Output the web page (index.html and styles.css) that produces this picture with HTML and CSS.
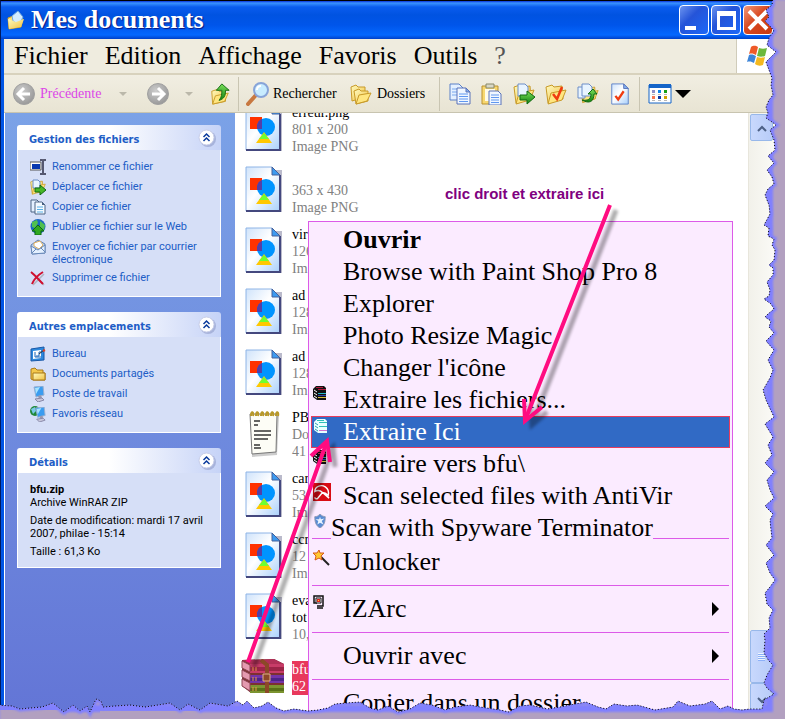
FILE: index.html
```html
<!DOCTYPE html>
<html lang="fr">
<head>
<meta charset="utf-8">
<title>Mes documents</title>
<link rel="stylesheet" href="styles.css">
</head>
<body>
<svg class="defs" aria-hidden="true">
  <defs>
    <linearGradient id="gPage" x1="0" y1="0" x2="1" y2="1"><stop offset="0" stop-color="#cfe3fb"/><stop offset=".45" stop-color="#fff"/><stop offset="1" stop-color="#a9d0fb"/></linearGradient>
    <linearGradient id="gFold" x1="0" y1="0" x2="1" y2="1"><stop offset="0" stop-color="#fffbc0"/><stop offset="1" stop-color="#f0c040"/></linearGradient>
    <radialGradient id="gGrey" cx=".4" cy=".35" r=".7"><stop offset="0" stop-color="#cdcdcd"/><stop offset="1" stop-color="#969696"/></radialGradient>
    <linearGradient id="gGreen" x1="0" y1="0" x2="0" y2="1"><stop offset="0" stop-color="#7be05a"/><stop offset="1" stop-color="#108010"/></linearGradient>
    <symbol id="image" viewBox="0 0 38 48">
      <path d="M4 4h33v42H4z" fill="#8c8ca8" opacity=".6"/>
      <path d="M1 1h26l8 8v36H1z" fill="url(#gPage)" stroke="#8eb4e6"/>
      <path d="M35 9v36H1" fill="none" stroke="#44487e" stroke-width="2"/>
      <path d="M27 1v8h8z" fill="#3d9af0" stroke="#44609a"/>
      <path d="M5 12h12v12H5z" fill="#ff3200"/>
      <circle cx="21" cy="22" r="9" fill="#0094ff"/>
      <path d="M12 20c1-3 2-5 5-6v10h-5z" fill="#5340a8"/>
      <path d="M19 27l8 11H11z" fill="#ffc800"/>
      <path d="M19 28l5 6H14z" fill="#6eff32"/>
    </symbol>
    <symbol id="folder" viewBox="0 0 22 22">
      <path d="M1 4l6-2 2 2 8-1 1 13-15 4z" fill="url(#gFold)" stroke="#c89a28"/>
      <path d="M6 10l15-3-4 10-14 4z" fill="#ffe680" stroke="#c89a28"/>
    </symbol>
    <symbol id="sheets" viewBox="0 0 22 22">
      <path d="M1 1h9l4 4v12H1z" fill="#e4f0ff" stroke="#5a80c8"/>
      <path d="M3 6h8M3 9h8M3 12h6" stroke="#78a8ee"/>
      <path d="M8 5h9l4 4v12H8z" fill="#f0f7ff" stroke="#5a72b8"/>
      <path d="M17 5v4h4z" fill="#80b0f0" stroke="#5a72b8"/>
      <path d="M10 11h9M10 13.500h9M10 16h9M10 18.500h9" stroke="#6098f0"/>
    </symbol>
    <symbol id="books" viewBox="0 0 14 14">
      <path d="M0 3l3-3h8l2 2v12H4l-4-3z" fill="#111"/>
      <path d="M5 3.500h8M3 1.500h7" stroke="#b01840"/>
      <path d="M5 7.500h8" stroke="#28b8c8"/>
      <path d="M5 9.500h8" stroke="#3048a8"/>
      <path d="M5 11.500h8" stroke="#d8c040"/>
      <path d="M1 4l3 2M1 7l3 2M1 10l3 2" stroke="#fff"/>
    </symbol>
    <symbol id="chevrons" viewBox="0 0 18 18">
      <circle cx="10" cy="10" r="8" fill="#8f9bc8" opacity=".6"/>
      <circle cx="8.500" cy="8.500" r="7.500" fill="#fff" stroke="#c8cee8"/>
      <path d="M5.500 8l3-3 3 3M5.500 12l3-3 3 3" fill="none" stroke="#0a3a9c" stroke-width="1.500"/>
    </symbol>
    <symbol id="pc" viewBox="0 0 16 16">
      <path d="M4 1l9-1 1 9-8 2z" fill="#3a9cf0" stroke="#9ab0d0"/><path d="M5 2l5-1-4 7z" fill="#a8e4ff"/>
      <path d="M8 10l3-1 1 3-3 1z" fill="#9898b0"/><path d="M5 13l7-1 2 2-6 2z" fill="#c8c8dc" stroke="#8888a8"/>
    </symbol>
  </defs>
</svg>

<main class="window">
  <header class="titlebar">
    <svg class="i18" viewBox="0 0 18 20"><path d="M1 8l5-2 10 3-2 8-12 2z" fill="#ffe078" stroke="#c89a28"/><path d="M5 6l6-5 5 6-4 8-6-4z" fill="#d4ecff" stroke="#72a8de"/><path d="M1 9l8 3 8-3-3 8-12 2z" fill="url(#gFold)"/></svg>
    <h1>Mes documents</h1>
    <div class="winbtns">
      <button aria-label="Réduire"><svg viewBox="0 0 26 26"><path d="M4 19h11v4H4z" fill="#fff"/></svg></button>
      <button aria-label="Agrandir"><svg viewBox="0 0 26 26"><path d="M4 4h19v19H4zM7 9v11h13V9z" fill="#fff" fill-rule="evenodd"/></svg></button>
      <button class="close" aria-label="Fermer"><svg viewBox="0 0 26 26"><path d="M4 4l18 18M22 4L4 22" stroke="#fff" stroke-width="4"/></svg></button>
    </div>
  </header>

  <nav class="menubar">
    <button>Fichier</button><button>Edition</button><button>Affichage</button><button>Favoris</button><button>Outils</button><button>?</button>
    <span class="flag"><svg viewBox="0 0 24 24"><path d="M6 3c3-2 5-1 7 0l-2 8c-2-1-4-2-7-1z" fill="#ee5a28"/><path d="M14 4c3 1 5 1 8 0l-2 8c-3 1-5 1-8 0z" fill="#6cb83c"/><path d="M4 11c3-1 5 0 7 1l-2 7c-2-1-4-2-7-1z" fill="#3c84d8"/><path d="M12 13c3 1 5 1 8 0l-2 8c-3 1-5 1-8-1z" fill="#f4b820"/></svg></span>
  </nav>

  <div class="toolbar">
    <button class="back"><svg viewBox="0 0 22 22"><circle cx="11" cy="11" r="10.500" fill="url(#gGrey)" stroke="#a0a0a0"/><path d="M11 5l-6 6 6 6M6 11h11" fill="none" stroke="#fff" stroke-width="3"/></svg>Précédente</button>
    <span class="tri"></span>
    <button class="forward" aria-label="Suivante"><svg viewBox="0 0 22 22"><circle cx="11" cy="11" r="10.500" fill="url(#gGrey)" stroke="#a0a0a0"/><path d="M11 5l6 6-6 6M16 11H5" fill="none" stroke="#fff" stroke-width="3"/></svg></button>
    <span class="tri"></span>
    <button class="up" aria-label="Dossier parent"><svg viewBox="0 0 22 24"><path d="M2 9l6-2 2 2h7v11l-14 3z" fill="url(#gFold)" stroke="#c89a28"/><path d="M6 14l14-3-4 9-13 3z" fill="#ffe680" stroke="#c89a28"/><path d="M13 1l8 7h-4c0 6-1 9-7 11 3-4 3-7 3-11H7z" fill="url(#gGreen)" stroke="#116a11"/></svg></button>
    <span class="rule"></span>
    <button class="search"><svg viewBox="0 0 24 24"><path d="M10 13l-8 9" stroke="#c87840" stroke-width="4" stroke-linecap="round"/><circle cx="15" cy="8" r="7" fill="#c8ecff" stroke="#88a4d8" stroke-width="2"/><path d="M11 8c0-3 2-4 4-4" fill="none" stroke="#fff" stroke-width="2"/></svg>Rechercher</button>
    <button class="folders"><svg viewBox="0 0 22 22"><path d="M1 4l5-2 2 2 7 0v10l-13 4z" fill="url(#gFold)" stroke="#c89a28"/><path d="M4 8l5-2 2 2h7v10l-12 3z" fill="url(#gFold)" stroke="#c89a28"/><path d="M9 12l12-2-4 8-11 3z" fill="#ffe680" stroke="#c89a28"/></svg>Dossiers</button>
    <span class="rule"></span>
    <div class="tools">
      <button aria-label="Copier"><svg><use href="#sheets"/></svg></button>
      <button aria-label="Coller"><svg viewBox="0 0 22 22"><path d="M1 3h16v18H1z" fill="#f8d870" stroke="#b89030"/><path d="M4 6h10v12H4z" fill="#fffbe8"/><path d="M5 1h8v4H5z" fill="#d8d8c8" stroke="#888868"/><path d="M8 8h9l3 3v11H8z" fill="#f0f7ff" stroke="#5a72b8"/><path d="M10 12h8M10 14.500h8M10 17h8M10 19.500h8" stroke="#6098f0"/></svg></button>
      <button aria-label="Déplacer vers"><svg viewBox="0 0 22 22"><use href="#folder" width="22" height="22"/><path d="M5 1h7l3 3v9H5z" fill="#e8f4ff" stroke="#6c8ec8"/><path d="M7 12h7V8l8 6-8 7v-4H7z" fill="url(#gGreen)" stroke="#116a11"/></svg></button>
      <button aria-label="Copier vers"><svg viewBox="0 0 22 22"><use href="#folder" width="22" height="22"/><path d="M8 11l4 5 5-12" fill="none" stroke="#f03c10" stroke-width="2.500"/></svg></button>
      <button aria-label="Ouvrir"><svg viewBox="0 0 22 22"><use href="#folder" x="3" width="19" height="22"/><path d="M1 4h7v11H1z" fill="#e8f4ff" stroke="#6c8ec8"/><path d="M5 1h7l3 3v9H5z" fill="#e8f4ff" stroke="#6c8ec8"/><path d="M5 17c6 1 9-1 9-6h-3l5-5 4 5h-3c0 8-5 10-12 6z" fill="url(#gGreen)" stroke="#116a11"/></svg></button>
      <button aria-label="Propriétés"><svg viewBox="0 0 22 24"><path d="M2 1h13l5 5v17H2z" fill="url(#gPage)" stroke="#5a80c8"/><path d="M15 1v5h5z" fill="#80b0f0" stroke="#5a72b8"/><path d="M6 14l3 4 6-9" fill="none" stroke="#f03c10" stroke-width="2.500"/></svg></button>
    </div>
    <span class="rule"></span>
    <button class="views" aria-label="Affichage"><svg viewBox="0 0 24 20"><path d="M1 1h22v18H1z" fill="#fff" stroke="#1464c8"/><path d="M1 0h22v4H1z" fill="#1464c8"/><path d="M4 6h3v3H4z" fill="#9090c8"/><path d="M10 6h3v3h-3z" fill="#1084e8"/><path d="M16 6h3v3h-3z" fill="#18a018"/><path d="M4 12h3v3H4z" fill="#f87850"/><path d="M10 12h3v3h-3z" fill="#1038a0"/><path d="M16 12h3v3h-3z" fill="#d0a000"/><path d="M4 10.500h3m3 0h3m3 0h3M4 16.500h3m3 0h3m3 0h3" stroke="#b8b8b8"/></svg><span class="drop"></span></button>
  </div>

  <div class="content">
    <aside class="sidebar">
      <section class="panel">
        <header><h2>Gestion des fichiers</h2><button aria-label="Réduire la section"><svg><use href="#chevrons"/></svg></button></header>
        <ul>
          <li><svg viewBox="0 0 16 16"><path d="M0 3h11v8H0z" fill="#fff" stroke="#555"/><path d="M2 5h8v5H2z" fill="#0838b0"/><path d="M10 1h2l1 1 1-1h2M13 2v12M10 15h2l1-1 1 1h2" stroke="#555870" stroke-width="2" fill="none"/></svg><a href="#">Renommer ce fichier</a></li>
          <li><svg viewBox="0 0 16 16"><use href="#folder" width="16" height="16"/><path d="M3 1h5l2 2v6H3z" fill="#e8f4ff" stroke="#6c8ec8"/><path d="M5 9h5V6l6 5-6 5v-3H5z" fill="#48b828" stroke="#116a11"/></svg><a href="#">Déplacer ce fichier</a></li>
          <li><svg viewBox="0 0 16 16"><path d="M1 1h6l3 3v9H1z" fill="#e4f0ff" stroke="#4c6484"/><path d="M5 3h7l3 3v9H5z" fill="#f4faff" stroke="#4c6484"/><path d="M12 3v3h3z" fill="#4c6484"/><path d="M7 8h6M7 10.500h6M7 13h6" stroke="#58b0e8"/></svg><a href="#">Copier ce fichier</a></li>
          <li><svg viewBox="0 0 16 16"><circle cx="8" cy="7.500" r="7.500" fill="#1c68c0"/><path d="M2 3l5-2 1 3-3 5-3-1zM10 2l5 4-1 5-4-3z" fill="#50c050"/><path d="M8 6l6 6h-3v4H5v-4H2z" fill="#30a820" stroke="#0c6a10"/></svg><a href="#">Publier ce fichier sur le Web</a></li>
          <li><svg viewBox="0 0 16 16"><path d="M1 6l7-5 7 4v9L2 15z" fill="#b8d0f0" stroke="#6080b0"/><path d="M4 4l6-2 3 4-4 4-5-3z" fill="#fff" stroke="#e0b060"/><path d="M1 7l7 4 7-5v8L2 15zM2 14l4-4M15 13l-4-4" fill="#e4f0ff" stroke="#6888b8"/></svg><a href="#">Envoyer ce fichier par courrier électronique</a></li>
          <li><svg viewBox="0 0 16 16"><path d="M2 3l12 12M14 4L3 15" stroke="#888" stroke-width="1.500" opacity=".5"/><path d="M1 2c4 3 7 7 12 12M13 2C8 5 4 9 2 14" stroke="#d01030" stroke-width="2" fill="none"/></svg><a href="#">Supprimer ce fichier</a></li>
        </ul>
      </section>
      <section class="panel">
        <header><h2>Autres emplacements</h2><button aria-label="Réduire la section"><svg><use href="#chevrons"/></svg></button></header>
        <ul>
          <li><svg viewBox="0 0 16 16"><path d="M1 3l13-2v13L1 15z" fill="#2c88dc" stroke="#1858a8"/><path d="M3 5l8-1v8l-8 1z" fill="#fff"/><path d="M6 10h3V6h3M5 6v5l6 0" stroke="#1864b8" fill="none"/><path d="M9 8l5-4" stroke="#333"/><path d="M13 5l2-1" stroke="#e04020" stroke-width="2"/></svg><a href="#">Bureau</a></li>
          <li><svg viewBox="0 0 16 16"><path d="M1 3l4-1 2 2h6v3h2v7H3L1 13z" fill="#f4c84c" stroke="#a87818"/><path d="M3 7h12v7H3z" fill="url(#gFold)" stroke="#a87818"/></svg><a href="#">Documents partagés</a></li>
          <li><svg><use href="#pc"/></svg><a href="#">Poste de travail</a></li>
          <li><svg viewBox="0 0 16 16"><circle cx="5" cy="5" r="5" fill="#208838"/><path d="M1 3l4-2 1 4-3 3z" fill="#78c8e8"/><use href="#pc" x="2" y="1" width="15" height="15"/></svg><a href="#">Favoris réseau</a></li>
        </ul>
      </section>
      <section class="panel">
        <header><h2>Détails</h2><button aria-label="Réduire la section"><svg><use href="#chevrons"/></svg></button></header>
        <div class="details">
          <p><b>bfu.zip</b><br>Archive WinRAR ZIP</p>
          <p>Date de modification: mardi 17 avril 2007, philae - 15:14</p>
          <p>Taille : 61,3 Ko</p>
        </div>
      </section>
    </aside>

    <ul class="files">
      <li><svg><use href="#image"/></svg><p><b>erreur.png</b><br>801 x 200<br>Image PNG</p></li>
      <li><svg><use href="#image"/></svg><p><br>363 x 430<br>Image PNG</p></li>
      <li><svg><use href="#image"/></svg><p><b>vir</b><br>126<br>Im</p></li>
      <li><svg><use href="#image"/></svg><p><b>ad</b><br>128<br>Im</p></li>
      <li><svg><use href="#image"/></svg><p><b>ad</b><br>128<br>Im</p></li>
      <li><svg viewBox="0 0 38 48"><path d="M6 6h28l-2 39-25 2z" fill="#aaa" opacity=".6"/><path d="M5 4h27l-1 38-24 2z" fill="#fdfdf6" stroke="#777"/><path d="M6 6c0-6 3-4 2 0m3 0c0-6 3-4 2 0m3 0c0-6 3-4 2 0m3 0c0-6 3-4 2 0m3 0c0-6 3-4 2 0m3 0c0-6 3-4 2 0" fill="none" stroke="#b89828" stroke-width="2"/><path d="M9 11h6M9 15h4M9 21h17M9 25h17M9 29h14M9 35h6M9 38h7" stroke="#333" stroke-width="1.500"/></svg><p><b>PB</b><br>Do<br>41</p></li>
      <li><svg><use href="#image"/></svg><p><b>car</b><br>53<br>Im</p></li>
      <li><svg><use href="#image"/></svg><p><b>ccr</b><br>12<br>Im</p></li>
      <li><svg><use href="#image"/></svg><p><b>eva</b><br><b>tot</b><br>10,</p></li>
      <li class="chosen"><svg viewBox="0 0 44 36"><path d="M1 1l32-1 10 5v29H10L1 27z" fill="#7c3030"/><path d="M1 1l32-1 10 5H9z" fill="#b03058"/><path d="M9 5h34v9H9z" fill="#c83c68"/><path d="M9 8h34v4H9z" fill="#9c2448"/><path d="M9 16h34v8H9z" fill="#7434a8"/><path d="M9 19h34v3H9z" fill="#4c2488"/><path d="M9 26h34v8H9z" fill="#7c9430"/><path d="M9 29h34v3H9z" fill="#587018"/><path d="M1 2l8 4v7l-8-4zM1 11l8 4v7l-8-4zM1 20l8 4v8l-8-5z" fill="#e49ab0" stroke="#8c4454"/><path d="M20 1l6 5v28" fill="none" stroke="#8c4828" stroke-width="4"/><path d="M22 15h7v7h-7z" fill="#8c4828" stroke="#e0b088"/><path d="M12 8v4m3-4v4m-3 6v4m3-4v4m-3 6v4m3-4v4" stroke="#e89848"/></svg><p>bfu<br>62</p></li>
    </ul>

    <div class="scrollbar">
      <button aria-label="Haut"><svg viewBox="0 0 10 8"><path d="M1 7l4-4 4 4" fill="none" stroke="#4d6185" stroke-width="2"/></svg></button>
      <span class="thumb"><i></i></span>
      <button class="down" aria-label="Bas"><svg viewBox="0 0 10 8"><path d="M1 1l4 4 4-4" fill="none" stroke="#4d6185" stroke-width="2"/></svg></button>
    </div>
  </div>
</main>

<p class="note">clic droit et extraire ici</p>

<ul class="context">
  <li><button class="default">Ouvrir</button></li>
  <li><button>Browse with Paint Shop Pro 8</button></li>
  <li><button>Explorer</button></li>
  <li><button>Photo Resize Magic</button></li>
  <li><button>Changer l'icône</button></li>
  <li><svg class="i14"><use href="#books"/></svg><button>Extraire les fichiers...</button></li>
  <li class="active"><svg class="i14" viewBox="0 0 14 14"><path d="M0 3l3-3h8l2 2v12H4l-4-3z" fill="#e8ffff"/><path d="M5 3.500h8M3 1.500h7M5 7.500h8" stroke="#30c0b8"/><path d="M5 11.500h8" stroke="#d070d0"/><path d="M1 4l3 2M1 7l3 2M1 10l3 2" stroke="#30a0b0"/></svg><button>Extraire Ici</button></li>
  <li><svg class="i14"><use href="#books"/></svg><button>Extraire vers bfu\</button></li>
  <li><svg class="i18" viewBox="0 0 19 19"><path d="M0 0h19v19H0z" fill="#d80c14"/><path d="M2 9C2 4 8 1 13 4c3 2 4 5 3 9-2-2-4-3-6-3-2-2-5-3-8-1zM10 10l-5 6c-1 1-3 1-3-1M10 10l7 6" fill="none" stroke="#fff" stroke-width="1.500"/></svg><button>Scan selected files with AntiVir</button></li>
  <li class="wide"><svg class="i14" viewBox="0 0 14 16"><path d="M1 3c3 0 4-1 6-3 2 2 4 3 6 3 0 6-1 10-6 13C2 13 1 9 1 3z" fill="#5a8cd4" stroke="#9098b0"/><path d="M7 3l1 3 4-1-3 3 2 4-4-2-3 2 1-4-3-2h4z" fill="#e8f4ff"/></svg><button>Scan with Spyware Terminator</button></li>
  <li class="line overlap" role="separator"></li>
  <li><svg class="i18" viewBox="0 0 18 18"><path d="M8 8l8 8" stroke="#222" stroke-width="2"/><path d="M6 1l1 3 4 0-3 3 1 4-3-2-4 2 1-4-3-3 4 0z" fill="#ffc830" stroke="#d85818"/></svg><button>Unlocker</button></li>
  <li class="line" role="separator"></li>
  <li><svg class="i14" viewBox="0 0 14 14"><path d="M1 4V1h9v10H4M1 4v4h3M4 13h6" fill="none" stroke="#111" stroke-width="1.500"/><path d="M3 3h5v5H3z" fill="#fff" stroke="#111"/><path d="M4 4h3v3H4z" fill="#e02020"/><path d="M5 5h1v1H5z" fill="#ffe020"/></svg><button>IZArc</button><span class="arrow"></span></li>
  <li class="line" role="separator"></li>
  <li><button>Ouvrir avec</button><span class="arrow"></span></li>
  <li class="line" role="separator"></li>
  <li><button>Copier dans un dossier</button></li>
</ul>

<svg class="pointers" viewBox="0 0 785 719" aria-hidden="true">
  <defs><filter id="soft" x="-20%" y="-20%" width="140%" height="140%"><feGaussianBlur stdDeviation="1.500"/></filter></defs>
  <g transform="translate(6 5)" fill="none" stroke="#000" stroke-width="5" opacity=".32" filter="url(#soft)"><path d="M610 205L526 420M524 399l2 21 15-13M248 662l79-220M312 456l15-14 2 20"/></g>
  <g fill="none" stroke="#ff0c80" stroke-width="4"><path d="M610 205L526 418M248 662l78-218"/><path d="M524 399l1 22 17-14M311 456l16-15 3 21"/></g>
</svg>

<svg class="torn" viewBox="0 0 785 719" preserveAspectRatio="none" aria-hidden="true">
  <defs>
    <path id="edge" d="M773 -3L772 5 766 10 769 17 765 21 771 27 774 31 769 38 767 45 776 52 770 58 766 62 769 70 772 78 771 85 773 95 769 100 766 107 768 113 766 118 772 122 776 125 770 130 774 140 775 150 768 156 774 163 767 170 772 177 774 184 768 189 765 195 769 205 770 214 764 225 769 228 768 236 774 239 772 245 775 250 774 260 769 265 773 268 773 275 767 282 770 290 769 296 764 299 771 304 774 309 768 314 765 317 771 321 769 327 774 333 766 341 774 350 768 360 773 370 770 378 763 390 766 400 774 417 765 424 773 437 768 445 772 455 765 463 774 472 767 480 770 490 774 498 765 506 773 514 770 520 771 530 772 538 766 545 770 550 774 555 766 563 770 573 775 580 770 587 765 593 767 604 773 610 769 618 770 628 764 634 765 640 764 653 769 661 773 665 767 675 764 683 767 688 774 694 764 700 762 709 750 709 742 710 734 709 728 706 720 709 712 701 705 704 690 706 678 701 673 707 655 710 637 705 627 706 614 704 606 709 598 707 586 702 575 704 560 707 547 709 530 705 520 706 509 712 500 710 480 707 470 705 455 707 445 710 432 705 420 703 410 709 398 712 388 706 378 710 370 708 360 702 346 703 335 704 328 708 318 710 308 711 294 709 284 711 276 708 268 702 262 706 254 708 247 701 243 705 237 701 228 706 210 703 200 710 188 704 180 710 170 703 158 705 145 707 130 705 115 706 103 707 101 701 96 699 90 712 87 706 80 711 73 705 64 712 53 703 42 707 30 708 20 709 12 706 -3 705V725H790V-3z"/>
    <clipPath id="outside"><use href="#edge"/></clipPath>
    <filter id="halo" x="-2%" y="-2%" width="104%" height="104%"><feGaussianBlur stdDeviation="1"/></filter>
  </defs>
  <use href="#edge" fill="#b2a0c0"/>
  <g clip-path="url(#outside)">
    <path d="M766 -3H773V712H-3V705H766z" fill="#8080ff" filter="url(#halo)"/>
    <path d="M-3 710H60V725H-3zM100 711H200V725H100z" fill="#b2a0c0"/>
    <use href="#edge" fill="none" stroke="#8080ff" stroke-width="5" filter="url(#halo)"/>
  </g>
  <use href="#edge" fill="none" stroke="#000" stroke-dasharray="1 2"/>
</svg>
</body>
</html>
```
FILE: styles.css
```css
* { box-sizing: border-box; }

body {
  margin: 0;
  height: 100vh;
  overflow: hidden;
  position: relative;
  background: #b2a0c0;
  font-family: "Liberation Serif", "Book Antiqua", serif;
  color: #000;
}

h1, h2, p, ul { margin: 0; padding: 0; }
ul { list-style: none; }
svg { display: block; flex: none; }
button {
  display: flex;
  align-items: center;
  margin: 0;
  padding: 0;
  border: 0;
  background: none;
  font: inherit;
  color: inherit;
  white-space: nowrap;
}
.defs { position: absolute; width: 0; height: 0; }
.i18 { width: 18px; height: 20px; }
.i14 { width: 14px; height: 14px; }

.window {
  display: flex;
  flex-direction: column;
  height: 100vh;
  border-top: 1px solid #000;
  border-left: 1px solid #001a60;
}

.titlebar {
  display: flex;
  align-items: center;
  flex: none;
  height: 38px;
  padding: 0 12px 0 6px;
  gap: 6px;
  background: linear-gradient(#0831d9 0, #3a93ff 2px, #0a5cee 6px, #0053e1 14px, #0055ea 24px, #0468ff 34px, #0040c8 38px);
  color: #fff;
}
.titlebar h1 {
  flex: 1;
  font-size: 26px;
  line-height: 30px;
  text-shadow: 1px 1px 1px #0a1883;
}
.winbtns { display: flex; gap: 2px; }
.winbtns button {
  justify-content: center;
  width: 30px;
  height: 30px;
  border: 1px solid #fff;
  border-radius: 4px;
  background: linear-gradient(135deg, #6c94f0, #2554d8 40%, #1c68f8);
}
.winbtns .close { background: linear-gradient(135deg, #f09878, #d84820 45%, #c83810); }
.winbtns svg { width: 26px; height: 26px; }

.menubar {
  display: flex;
  align-items: stretch;
  flex: none;
  height: 36px;
  margin-left: 3px;
  padding-left: 10px;
  gap: 17px;
  border-bottom: 2px solid #d8d2bd;
  background: #efecdf;
  font-size: 26px;
  box-shadow: -3px 0 #0055e5;
}
.menubar button:last-of-type { color: #555; }
.flag {
  display: flex;
  align-items: center;
  width: 49px;
  margin-left: auto;
  padding-left: 8px;
  border-left: 1px solid #d0ccba;
  background: #fff;
}
.flag svg { width: 24px; height: 24px; }

.toolbar {
  display: flex;
  align-items: center;
  flex: none;
  height: 38px;
  margin-left: 3px;
  padding-left: 9px;
  border-bottom: 1px solid #c8c4b0;
  background: linear-gradient(#f1eee2, #e8e4d3);
  font-size: 14px;
  box-shadow: -3px 0 #0055e5;
}
.toolbar svg { width: 22px; height: 22px; }
.back { width: 106px; gap: 5px; color: #dc46e8; }
.tri {
  border: 4px solid transparent;
  border-top-color: #bbb8aa;
  border-bottom: 0;
}
.forward { margin: 0 16px 0 20px; }
.toolbar .up { margin: 0 7px 0 16px; }
.rule {
  width: 1px;
  height: 34px;
  background: #c9c5b2;
}
.search { width: 104px; margin-left: 7px; gap: 3px; }
.search svg { width: 24px; height: 24px; }
.folders { width: 89px; gap: 5px; }
.tools { display: flex; gap: 10px; padding: 0 8px 0 9px; }
.views { gap: 3px; margin-left: 8px; }
.views svg { width: 24px; height: 20px; }
.drop {
  border: 8px solid transparent;
  border-top-color: #000;
  border-bottom: 0;
}

.content {
  display: flex;
  flex: 1;
  min-height: 0;
  overflow: hidden;
  margin-left: 3px;
  background: #fff;
  box-shadow: -3px 0 #0055e5;
}

.sidebar {
  width: 230px;
  flex: none;
  margin-left: 1px;
  padding: 12px 14px 0 12px;
  background: linear-gradient(#7ba2e7, #6375d6);
  font: 11px/13px Roboto, Tahoma, sans-serif;
}
.panel { margin-bottom: 15px; }
.panel header {
  display: flex;
  align-items: center;
  justify-content: space-between;
  height: 25px;
  padding: 0 5px 0 12px;
  border-radius: 3px 3px 0 0;
  background: linear-gradient(90deg, #fff 45%, #c6d3f7);
}
.panel h2 {
  padding-top: 3px;
  font: bold 11px/13px "DejaVu Sans Condensed", Tahoma, sans-serif;
  color: #215dc6;
}
.panel header svg { width: 18px; height: 18px; }
.panel ul, .details {
  border: 1px solid #fff;
  border-top: 0;
  background: #d6dff7;
}
.panel ul {
  display: flex;
  flex-direction: column;
  gap: 4px;
  padding: 9px 12px 10px;
}
.panel li { display: flex; gap: 6px; }
.panel li svg { width: 16px; height: 16px; }
.panel a {
  padding-top: 1px;
  color: #215dc6;
  text-decoration: none;
}
.details {
  display: flex;
  flex-direction: column;
  gap: 5px;
  padding: 10px 12px 9px;
}

.files {
  flex: 1;
  min-width: 0;
  margin-top: -9px;
  padding-left: 10px;
  font-size: 14px;
  line-height: 17px;
  color: #808080;
}
.files li {
  display: flex;
  gap: 9px;
  height: 51px;
  margin-bottom: 10px;
}
.files li > svg { width: 38px; height: 48px; margin-top: 1px; }
.files b { font-weight: normal; color: #000; }
.files .chosen { gap: 7px; margin-left: -4px; padding-top: 8px; }
.files .chosen > svg { width: 44px; height: 36px; margin-top: -2px; }
.chosen p { height: 34px; padding-right: 20px; background: #e8385c; color: #fff; }

.scrollbar {
  display: flex;
  flex-direction: column;
  width: 37px;
  flex: none;
  padding: 1px 12px 0 1px;
  border-left: 1px solid #e8e6dc;
  background: linear-gradient(90deg, #f2f1ea, #fefefb);
}
.scrollbar button, .thumb {
  display: flex;
  align-items: center;
  justify-content: center;
  height: 27px;
  border: 1px solid #98b8ea;
  border-radius: 2px;
  background: linear-gradient(90deg, #c8d8fd, #b8ccf8);
}
.scrollbar svg { width: 10px; height: 8px; }
.thumb { height: 53px; margin-top: auto; }
.thumb i {
  width: 7px;
  height: 8px;
  background: repeating-linear-gradient(#eef4fe 0 1px, #8cb0f8 1px 2px);
}
.scrollbar .down { height: 36px; flex: none; }

.note {
  position: absolute;
  left: 445px;
  top: 185px;
  font: bold 15px/18px "Liberation Sans", Arial, sans-serif;
  color: #800080;
}

.context {
  position: absolute;
  left: 308px;
  top: 221px;
  width: 425px;
  padding: 2px;
  border: 1px solid #dc5ae8;
  background: #fbebff;
  font-size: 26px;
}
.context li {
  display: flex;
  align-items: center;
  position: relative;
  height: 32px;
  padding-left: 32px;
}
.context li > svg { position: absolute; left: 2px; top: 2px; }
.context .active {
  border: 1px solid #e83c5c;
  padding-left: 31px;
  background: #316ac5;
  color: #fff;
}
.context .default { font-weight: bold; }
.context .wide { z-index: 1; padding-left: 20px; }
.context .wide button { background: #fbebff; height: 28px; }
.context .line {
  height: 1px;
  margin: 7px 1px;
  padding: 0;
  background: #dc5ae8;
}
.context .overlap { margin-top: -6px; }
.arrow {
  margin: 0 11px 0 auto;
  border: 7px solid transparent;
  border-left-color: #000;
  border-right: 0;
}

.pointers {
  position: absolute;
  left: 0;
  top: 0;
  width: 785px;
  height: 719px;
  pointer-events: none;
}
.torn {
  position: absolute;
  inset: 0;
  width: 100%;
  height: 100%;
  pointer-events: none;
}
```
